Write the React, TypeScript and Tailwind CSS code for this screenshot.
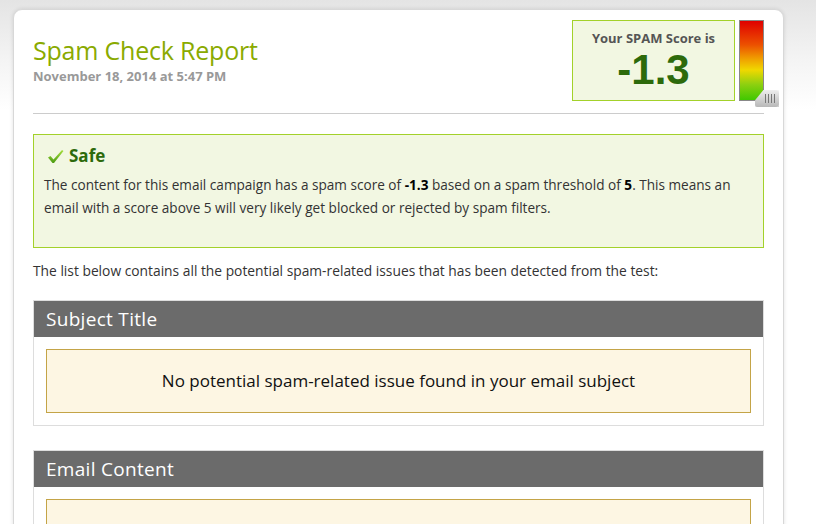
export default function App() {
  return (
    <div
      className="h-[524px] w-[816px] overflow-hidden bg-[linear-gradient(to_bottom,#e4e4e4_0px,#f4f4f4_60px,#ffffff_110px)] pl-[13px] pt-[9px]"
      style={{ fontFamily: '"Open Sans", "DejaVu Sans", sans-serif' }}
    >
      <div className="h-[600px] w-[771px] rounded-t-[9px] border border-[#d8d8d8] bg-white px-[19px] pt-[10px] shadow-[0_0_4px_rgba(0,0,0,0.12)]">
        <div className="flex items-start justify-between">
          <div className="pt-[14px]">
            <h1 className="text-[25px] leading-[32px] tracking-[-0.2px] text-[#8aaa00]">
              Spam Check Report
            </h1>
            <p className="mt-[1px] text-[13px] font-bold leading-[18px] text-[#999]">
              November 18, 2014 at 5:47 PM
            </p>
          </div>
          <div className="flex items-start">
            <div className="flex h-[81px] w-[163px] flex-col items-center border border-[#a3d12a] bg-[#f2f7e2] pt-[8px]">
              <span className="text-[13px] font-bold leading-[18px] text-[#555]">
                Your SPAM Score is
              </span>
              <span
                className="mt-[1px] text-[42px] font-bold leading-[44px] text-[#2d6a0b]"
                style={{ fontFamily: '"Liberation Sans", Arial, sans-serif' }}
              >
                -1.3
              </span>
            </div>
            <div className="relative ml-[4px] h-[81px] w-[25px]">
              <div className="h-full w-full border border-[#888] bg-[linear-gradient(to_bottom,#e00000_0%,#ec5000_30%,#f0a000_48%,#f0d800_62%,#8fd010_80%,#40c800_100%)]" />
              <div className="absolute left-[16px] top-[70px] flex h-[17px] w-[24px] items-center justify-end rounded-l-[2px] rounded-r-[3px] bg-[linear-gradient(to_bottom,#eeeeee,#b8b8b8)] pr-[4px] shadow-[1px_1px_2px_rgba(0,0,0,0.25)] [clip-path:polygon(35%_0,100%_0,100%_100%,0_100%,0_60%)]">
                <div className="flex gap-[2px]">
                  <span className="h-[9px] w-px bg-[#777]" />
                  <span className="h-[9px] w-px bg-[#777]" />
                  <span className="h-[9px] w-px bg-[#777]" />
                  <span className="h-[9px] w-px bg-[#777]" />
                </div>
              </div>
            </div>
          </div>
        </div>

        <div className="mt-[12px] h-px bg-[#cccccc]" />

        <div className="mt-[20px] h-[114px] border border-[#a3d12a] bg-[#f2f7e2] px-[10px] pt-[10px]">
          <div className="flex items-center gap-[5px] pl-[3px]">
            <svg width="17" height="15" viewBox="0 0 17 15">
              <defs>
                <linearGradient id="chk" x1="0" y1="0" x2="0" y2="1">
                  <stop offset="0" stopColor="#a8e040" />
                  <stop offset="1" stopColor="#4a9a10" />
                </linearGradient>
              </defs>
              <path d="M1 8.5 L3.5 7 L6.5 10.5 L15 1 L16.5 2 L7 14 L5.5 14 Z" fill="url(#chk)" />
            </svg>
            <span className="text-[17px] font-bold leading-[22px] text-[#2d6a0b]">Safe</span>
          </div>
          <p className="mt-[6px] text-[13.6px] leading-[23px] text-[#333]">
            The content for this email campaign has a spam score of <b className="text-black">-1.3</b> based on a spam threshold of <b className="text-black">5</b>. This means an email with a score above 5 will very likely get blocked or rejected by spam filters.
          </p>
        </div>

        <p className="mt-[14px] text-[13.8px] leading-[18px] text-[#333]">
          The list below contains all the potential spam-related issues that has been detected from the test:
        </p>

        <div className="mt-[20px] border border-[#dddddd]">
          <div className="flex h-[36px] items-center bg-[#6b6b6b] px-[12px] text-[19px] tracking-[0.3px] text-white">
            Subject Title
          </div>
          <div className="p-[12px]">
            <div className="flex h-[64px] items-center justify-center border border-[#c4a447] bg-[#fdf6e3] text-[17px] text-[#111]">
              No potential spam-related issue found in your email subject
            </div>
          </div>
        </div>

        <div className="mt-[24px] border border-[#dddddd]">
          <div className="flex h-[36px] items-center bg-[#6b6b6b] px-[12px] text-[19px] tracking-[0.3px] text-white">
            Email Content
          </div>
          <div className="p-[12px]">
            <div className="h-[64px] border border-[#c4a447] bg-[#fdf6e3]" />
          </div>
        </div>
      </div>
    </div>
  );
}
